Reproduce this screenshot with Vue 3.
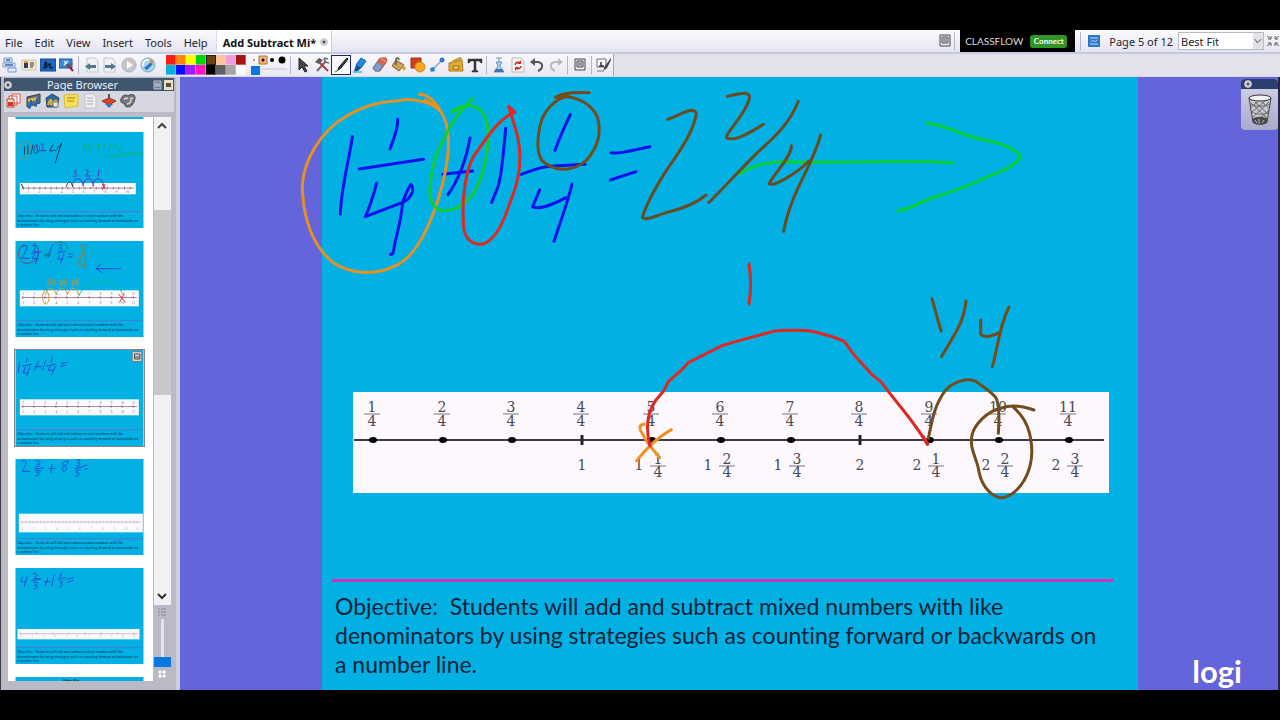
<script setup>
const menus = ['File', 'Edit', 'View', 'Insert', 'Tools', 'Help']

const shape = (d, fill = 'none', stroke = 'none', width = 1) => ({ d, fill, stroke, width })

const fileTools = [
  { name: 'Main menu', parts: [shape('M2 1h8v4H2zM1 6h12v4H1zM6 11h8v4H6z', '#dfe9f8', '#7d9bc8'), shape('M4 3h4M3 8h8', 'none', '#3466b0', 1.5)] },
  { name: 'Desktop tools', parts: [shape('M1 3h14v10H1z', '#f3ead0', '#c9c2ae'), shape('M3 6h4v5H3z', '#2b3f60'), shape('M3 4h4v2H3z', '#e09a30'), shape('M9 6h4M9 8h4M9 10h3', 'none', '#333')] },
  { name: 'Annotate over desktop', parts: [shape('M0 2h16v12H0z', '#1f68bd', '#114a90'), shape('M3 11C7 9 7 5 6 5s-2 5-1 6 4-5 5-4-2 4 1 4l2-1', 'none', '#06204e', 1.5)] },
  { name: 'Revealer', parts: [shape('M0 2h13v9H0z', '#3b86d0', '#1d5aa5'), shape('M5 4l4 4M9 4L5 8', 'none', '#d8ecff', 1.5), shape('M8 7l6 7', 'none', '#8f2430', 2), shape('M8 11l5-5', 'none', '#5b6070', 2)] }
]
const pageTools = [
  { name: 'Previous page', parts: [shape('M4 1h8l3 3v11H4z', '#f0f1f5', '#c3c6cf'), shape('M7 6v2h6v3H7v2L2 9.500z', '#55768f')] },
  { name: 'Next page', parts: [shape('M2 1h8l3 3v11H2z', '#f0f1f5', '#c3c6cf'), shape('M9 6v2H3v3h6v2l5-3.500z', '#55768f')] },
  { name: 'Play', parts: [shape('M8 1a7 7 0 100 14A7 7 0 008 1z', '#c6c6ca', '#b0b0b5'), shape('M6 4l6 4-6 4z', '#fff')] },
  { name: 'Profile', parts: [shape('M8 1a7 7 0 100 14A7 7 0 008 1z', '#a9d4ef', '#88a9bf'), shape('M4 11l7-6 2 2-6 6z', '#2c74bd'), shape('M9 2l5 2-3 3z', '#e8913c'), shape('M3 9c-1-4 3-7 6-6', 'none', '#fff', 1.5)] }
]
const drawTools = [
  { name: 'Select', parts: [shape('M4 1v12l3-3 3 5 2-1-3-5h4z', '#45454a', '#242428')] },
  { name: 'Tools', parts: [shape('M3 14l9-10', 'none', '#6a6c72', 2), shape('M10 1l1 4 4 1M10 1l4 1', 'none', '#6a6c72', 1.5), shape('M5 5l9 9', 'none', '#b33a36', 2), shape('M1 5l4-4 4 2-4 4z', '#5a5b60')] },
  { name: 'Pen', selected: true, parts: [shape('M14 1L6 10l-1 3 3-2 7-9z', '#333a3e', '#16191c'), shape('M5 13l-3 2', 'none', '#7c8b3c', 1.5)] },
  { name: 'Highlighter', parts: [shape('M8 1l5 3-5 7-5-3z', '#1c8be0', '#0d66ae'), shape('M3 8l5 3-3 3H1z', '#1a4f86'), shape('M0 15h9', 'none', '#3cb6f0', 1.5)] },
  { name: 'Eraser', parts: [shape('M8 1h6l1 3-7 10H3l-2-3z', '#d8664e', '#b94a38'), shape('M5 5l6 4-4 5H3l-2-3z', '#7f9dc4', '#6b83ab'), shape('M8 1l7 4', 'none', '#eaa695')] },
  { name: 'Fill', parts: [shape('M5 3l8 5-5 6-7-5z', '#caa45a', '#80633a'), shape('M5 8V2c0-2 3-1 3 1', 'none', '#66583f', 1.5), shape('M12 8l3 3-2 3-2-3z', '#e0a228')] },
  { name: 'Shape', parts: [shape('M1 1h10v10H1z', '#d23c20', '#a52d18'), shape('M10 5a5 5 0 100 10 5 5 0 000-10z', '#f5a623', '#da8712')] },
  { name: 'Connector', parts: [shape('M3 13L13 3', 'none', '#7ba6d0', 1.5), shape('M13 1a2 2 0 100 4 2 2 0 000-4z', '#2a80d5', '#1e66b0'), shape('M1 11l4-1 1 4-4 1z', '#2a80d5')] },
  { name: 'Clip art', parts: [shape('M1 6l13-3 1 11H1z', '#e2ac32', '#ab7a1c'), shape('M4 5l8-4 2 3', 'none', '#c79a38', 2), shape('M5 9h6v3H5z', '#f6d67a', '#9b6b14')] },
  { name: 'Text', parts: [shape('M1 2h14v4h-1l-2-2H9v9l2 1v1H5v-1l2-1V4H4L2 6H1z', '#35353a', '#35353a', 0.5)] }
]
const editTools = [
  { name: 'Clear', parts: [shape('M5 1h6M8 1v4M5 5h6l-2 4 4 6H3l4-6z', '#a9cbe4', '#7395b3'), shape('M5 12h6l2 3H3z', '#3d78ac')] },
  { name: 'Reset page', parts: [shape('M2 1h9l3 3v11H2z', '#f6f6f8', '#bbb'), shape('M5 8a3 3 0 015-2M11 9a3 3 0 01-5 2', 'none', '#d02a24', 1.5), shape('M11 3v4H7zM5 14v-4h4z', '#d02a24')] },
  { name: 'Undo', parts: [shape('M3 5h6c6 1 5 7 0 9', 'none', '#55565c', 2), shape('M6 1L1 5l5 4z', '#55565c')] },
  { name: 'Redo', parts: [shape('M13 5H7c-6 1-5 7 0 9', 'none', '#b9bac0', 2), shape('M10 1l5 4-5 4z', '#b9bac0')] }
]
const noteIcon = [shape('M3 2h10v11H3z', '#ececf1', '#45464c'), shape('M5 4h6v6H5z', 'none', '#45464c'), shape('M6 6h4M6 8h4', 'none', '#45464c')]
const deskIcon = [shape('M1 2h9v8H1z', '#fff', '#666b74'), shape('M5 5v4M3 9h5', 'none', '#333', 1.5), shape('M15 1L9 9l-2 5 4-3 4-8z', '#3c4348'), shape('M1 14h7', 'none', '#777')]
const browserTools = [
  { name: 'Pages', parts: [shape('M6 1h8v9H6zM3 3h8v9H3z', '#fff', '#d9594a'), shape('M1 6h7v8H1z', '#f5e6d8', '#c23a2c'), shape('M2 9h5v4H2z', '#d2382a')] },
  { name: 'Resources', parts: [shape('M2 4l13-3v9L2 14z', '#5d6d82', '#333f50'), shape('M3 6l9-2v3l-9 2z', '#e5b53c'), shape('M6 7v6M12 5v6', 'none', '#2565b5', 2), shape('M3 14h3M9 12h3', 'none', '#2565b5', 3)] },
  { name: 'Objects', parts: [shape('M2 5l6-4 7 4-2 9H3z', '#2d6aa0', '#234b70'), shape('M4 12c3-9 4-4 3-1s5-7 6-2', 'none', '#e8b030', 2), shape('M9 9h5v5H9z', '#e8e8e8', '#777')] },
  { name: 'Notes', parts: [shape('M1 2l14-1v12l-13 2z', '#f8df58', '#dabf38'), shape('M4 5h8M4 8h7', 'none', '#a58a18')] },
  { name: 'Properties', parts: [shape('M3 1h8l3 3v11H3z', '#eeeeF1', '#c2c2c8'), shape('M5 5h6M5 8h6M5 11h6', 'none', '#aaa')] },
  { name: 'Actions', parts: [shape('M8 1v4', 'none', '#555', 2), shape('M1 8l7-3 7 3-7 4z', '#d64834', '#9a3325'), shape('M4 11h8l-4 4z', '#3d77ad')] },
  { name: 'Voting', parts: [shape('M1 6c1-4 5-5 7-3 2-2 7-2 7 1 0 5-3 10-7 10-3 0-4-2-3-4C2 11 0 9 1 6z', '#77797e', '#4a4b50'), shape('M4 6l4-1M10 6l3-1M7 11c2 0 4-2 4-4', 'none', '#ddd', 1.5)] }
]

const colours = ['#fb1d10', '#ff8410', '#ffff08', '#08d210', '#6d4311', '#f9c49c', '#ef9fdc', '#a81410', '#08b0e2', '#0a0aff', '#a31aff', '#ff16b8', '#000000', '#606060', '#a5a5a5', '#ffffff']

const marks = [
  { x: 373, top: '1' }, { x: 443, top: '2' }, { x: 512, top: '3' },
  { x: 582, top: '4', whole: '1' }, { x: 652, top: '5', whole: '1', part: '1' },
  { x: 721, top: '6', whole: '1', part: '2' }, { x: 791, top: '7', whole: '1', part: '3' },
  { x: 860, top: '8', whole: '2' }, { x: 930, top: '9', whole: '2', part: '1' },
  { x: 999, top: '10', whole: '2', part: '2' }, { x: 1069, top: '11', whole: '2', part: '3' }
]

const objective = [
  'Objective:\u00a0 Students will add and subtract mixed numbers with like',
  'denominators by using strategies such as counting forward or backwards on',
  'a number line.'
]

const blue = '#1c4fd6'
const thumbs = [
  { id: 2, blank: true, ink: [] },
  {
    id: 3, line: { x: 13, y: 153, w: 348, h: 34, ticks: 20, labels: false },
    ink: [
      shape('M30 27C5 35 5 82 28 82 54 78 52 26 30 27', 'none', '#7c9a68', 3),
      shape('M27 45v22M37 39v26M53 38l-7 28', 'none', '#17425e', 3),
      shape('M62 39c16 0 12 24-2 25-9-4-5-22 2-25M63 42l4 18M76 36c12-5 6 20 0 20h15', 'none', '#343fb0', 3),
      shape('M112 39l-10 18 19-2M138 33c-5 25-15 0-12 18M138 33l-19 60', 'none', '#17425e', 3),
      shape('M208 35l-4 23M222 38l-12 12 13 8M233 37l-8 20M251 32l-4 25M244 40h14M268 36l-6 20M286 38l-5 20M300 36l-6 12 12-3M319 38l-8 20M263 79c20-12 36-11 35-8s22-10 25-6l21-4 36 4M290 76l88-12', 'none', '#08b478', 3),
      shape('M171 163c1-31 30-31 32 0 2-31 30-31 30 0 1-31 29-31 31 0M177 116c10-5 6 7 0 8 11 0 8 13-2 9M211 115c12-6 6 10 0 17h13M251 112l-3 20', 'none', '#5038c8', 3),
      shape('M153 163c2-17 16-17 18 0M18 157l6 12', 'none', '#333', 3),
      shape('M261 157l9 14M269 157l-8 15', 'none', '#e0203a', 3)
    ]
  },
  {
    id: 4, line: { x: 13, y: 148, w: 357, h: 48, ticks: 11, labels: true },
    ink: [
      shape('M26 10C2 18 2 67 34 67c38 0 46-51 20-60', 'none', '#704b6c', 3),
      shape('M20 17c22-13 16 10-3 35h23M51 15c13-7 11 7 1 17h13M47 38l31-6M56 41l-6 12h18M69 39L60 68M86 42h18M111 11L97 50M131 12c12-4 10 5 0 9 14-1 8 12-1 10M125 37l25-6M132 43l-6 11h16M145 40l-10 27M159 39h12M158 48h12M315 83h-73l13-13M242 83l18 12', 'none', blue, 3),
      shape('M90 35l12 12M86 50l15-16', 'none', '#138a70', 3),
      shape('M115 9c12-10 40-8 42 14', 'none', '#138a70', 3),
      shape('M194 15c18-6 15 7 3 14 17 0 12 13-5 12M187 49l24-5M195 55l-6 16h18M210 52l-5 31', 'none', '#698b66', 4),
      shape('M90 148c-12 0-11 41 0 41 15 0 13-41 0-41M90 160c8-24 25-24 32 0 8-24 25-24 34 0 8-24 25-24 34 0', 'none', '#dc973c', 3),
      shape('M100 113l-4 20M112 115l-12 20M119 117l-8 12h10M138 113l-4 20M148 115l-12 20M154 117l-8 12h10M173 113l-4 20M183 115l-12 20M189 117l-8 12h10', 'none', '#88996a', 4),
      shape('M190 164c21-47 98-62 128-12', 'none', '#08c888', 3),
      shape('M309 159l20 24M326 158l-14 26', 'none', '#ef3a35', 3)
    ]
  },
  {
    id: 5, active: true, line: { x: 13, y: 148, w: 357, h: 48, ticks: 11, labels: true },
    ink: [shape('M12 36L8 66M36 25l-4 12M22 48l26-5M29 52l-6 17h15M43 50l-9 27M58 50h19M69 35L57 60M91 30l-10 30M111 21l-5 15M94 48l26-6M103 50l-5 11h15M120 48l-12 28M137 41l18-4M135 49l17-4', 'none', blue, 3)]
  },
  {
    id: 6, line: { x: 10, y: 164, w: 372, h: 56, ticks: 32, labels: true, faint: true },
    ink: [shape('M18 8c20-10 15 5 3 29h21M61 6c18-5 15 6 4 10 14 0 9 8-5 8M57 31l28-5M76 35H64l-1 6c12-2 12 9-2 9M100 28h20M110 16l-4 25M158 7c-26-2-16 12-8 17 10 8-7 19-10 8-2-12 19-13 18-25M184 3c14-5 12 5 2 8 14 1 8 11-3 10M178 29l25-6M195 33h-12l-1 7c12-2 12 12-2 12M206 20l9-2M208 31l10-3', 'none', blue, 3)]
  },
  {
    id: 7, line: { x: 6, y: 183, w: 366, h: 31, ticks: 8, labels: true, faint: true },
    ink: [shape('M21 27l-5 14h15M35 26l-9 29M53 18c17-6 14 7 2 14h16M49 38l28-5M55 44c18-4 12 7 2 8 15-1 8 12-3 11M87 41h16M97 30l-8 24M116 21l-8 34M137 15l-4 14M126 34l24-5M133 38c12-2 9 6 1 8 11 0 6 11-3 11M157 33l17-4M155 43l17-5', 'none', blue, 3)]
  },
  { id: 8, title: 'Video Bits', ink: [] }
]
</script>

<template>
  <div class="app">
    <header class="menubar">
      <nav class="menus">
        <button v-for="m in menus" :key="m" type="button">{{ m }}</button>
      </nav>
      <div class="tab">
        <span>Add Subtract Mi*</span>
        <button type="button" class="dot" aria-label="Close flipchart"></button>
      </div>
      <div class="menubar-right">
        <button type="button" class="icon" aria-label="Page notes">
          <svg viewBox="0 0 16 16"><path v-for="(p, i) in noteIcon" :key="i" :d="p.d" :fill="p.fill" :stroke="p.stroke" /></svg>
        </button>
        <span class="rule"></span>
        <div class="classflow"><span>CLASSFLOW</span><button type="button">Connect</button></div>
        <span class="rule"></span>
        <svg class="page-icon" viewBox="0 0 12 12"><path d="M0 0h12v12H0z" fill="#2f77c8" /><path d="M2 3h8M2 9h8M3 7c2-4 4 2 6-2" fill="none" stroke="#b5dcff" /></svg>
        <label class="zoom-box"><span>Page 5 of 12</span>
          <span class="select-wrap">
            <select><option>Best Fit</option></select>
            <svg viewBox="0 0 11 16"><path d="M2 6l3 4 4-4" fill="none" stroke="#444" /></svg>
          </span>
        </label>
        <button type="button" class="expand" aria-label="Full screen">
          <svg viewBox="0 0 14 14"><path d="M1 2l4 3M1 12l4-3M13 2L9 5M13 12L9 9M5 2v3H2M5 12V9H2M9 2v3h3M9 12V9h3" fill="none" stroke="#5a5c66" /></svg>
        </button>
      </div>
    </header>

    <div class="toolbar">
      <div class="tools">
        <button v-for="t in fileTools" :key="t.name" type="button" class="icon" :aria-label="t.name">
          <svg viewBox="0 0 16 16"><path v-for="(p, i) in t.parts" :key="i" :d="p.d" :fill="p.fill" :stroke="p.stroke" :stroke-width="p.width" /></svg>
        </button>
        <span class="rule"></span>
        <button v-for="t in pageTools" :key="t.name" type="button" class="icon" :aria-label="t.name">
          <svg viewBox="0 0 16 16"><path v-for="(p, i) in t.parts" :key="i" :d="p.d" :fill="p.fill" :stroke="p.stroke" :stroke-width="p.width" /></svg>
        </button>
        <div class="palette">
          <button v-for="(c, i) in colours" :key="c" type="button" :aria-label="'Colour ' + c" :class="{ picked: i === 4 }" :style="{ background: c }"></button>
        </div>
        <svg class="widths" viewBox="0 0 38 20">
          <path d="M9 1h8v8H9z" fill="#f7b377" stroke="#b87338" />
          <circle cx="4" cy="5" r="1" fill="#a57b66" /><circle cx="13" cy="5" r="1.500" /><circle cx="22" cy="5" r="2" /><circle cx="32" cy="5" r="3.500" />
          <path d="M1 11h9v9H1z" fill="#0878e0" /><path d="M12 14h25" stroke="#c5c5d0" />
        </svg>
        <span class="rule"></span>
        <button v-for="t in drawTools" :key="t.name" type="button" class="icon" :class="{ selected: t.selected }" :aria-label="t.name">
          <svg viewBox="0 0 16 16"><path v-for="(p, i) in t.parts" :key="i" :d="p.d" :fill="p.fill" :stroke="p.stroke" :stroke-width="p.width" /></svg>
        </button>
        <span class="rule"></span>
        <button v-for="t in editTools" :key="t.name" type="button" class="icon" :aria-label="t.name">
          <svg viewBox="0 0 16 16"><path v-for="(p, i) in t.parts" :key="i" :d="p.d" :fill="p.fill" :stroke="p.stroke" :stroke-width="p.width" /></svg>
        </button>
        <span class="rule"></span>
        <button type="button" class="icon" aria-label="Notes">
          <svg viewBox="0 0 16 16"><path v-for="(p, i) in noteIcon" :key="i" :d="p.d" :fill="p.fill" :stroke="p.stroke" /></svg>
        </button>
        <span class="rule"></span>
        <button type="button" class="icon" aria-label="Desktop annotate">
          <svg viewBox="0 0 16 16"><path v-for="(p, i) in deskIcon" :key="i" :d="p.d" :fill="p.fill" :stroke="p.stroke" :stroke-width="p.width" /></svg>
        </button>
      </div>
    </div>

    <div class="work">
      <aside class="browser">
        <div class="browser-head">
          <button type="button" class="dot" aria-label="Close page browser"></button>
          <h2>Page Browser</h2>
          <svg viewBox="0 0 20 10"><path d="M1 1h7v8H1z" fill="#6d7c8c" stroke="#c2cad3" /><path d="M2 4h5M2 6h5" stroke="#d8dee4" /><path d="M11 0h9v10h-9z" fill="#e3dfcc" /><path d="M13 3h5v4h-5z" fill="#5e5030" /></svg>
        </div>
        <div class="browser-tools">
          <button v-for="t in browserTools" :key="t.name" type="button" class="icon" :aria-label="t.name">
            <svg viewBox="0 0 16 16"><path v-for="(p, i) in t.parts" :key="i" :d="p.d" :fill="p.fill" :stroke="p.stroke" :stroke-width="p.width" /></svg>
          </button>
        </div>
        <div class="pages">
          <div class="list">
            <svg v-for="t in thumbs" :key="t.id" class="thumb" :class="{ active: t.active }" viewBox="0 0 384 288">
              <rect width="384" height="288" fill="#02b1e4" />
              <g v-if="t.line">
                <rect :x="t.line.x" :y="t.line.y" :width="t.line.w" :height="t.line.h" fill="#fdfbff" />
                <path :d="`M${t.line.x + 6} ${t.line.y + t.line.h * 0.45}h${t.line.w - 12}`" :stroke="t.line.faint ? '#b7a0ac' : '#6f5260'" stroke-width="2" />
                <path v-for="n in t.line.ticks" :key="n" :d="`M${t.line.x + 9 + (n - 1) * (t.line.w - 26) / (t.line.ticks - 1)} ${t.line.y + t.line.h * 0.45 - 4}v8`" :stroke="t.line.faint ? '#c4b8c4' : '#7a5963'" stroke-width="2" />
                <template v-if="t.line.labels">
                  <text v-for="n in 11" :key="n" class="tick-label" :class="{ faint: t.line.faint }" :x="t.line.x + 10 + (n - 1) * (t.line.w - 26) / 10" :y="t.line.y + t.line.h - 7">{{ n }}</text>
                </template>
                <template v-if="t.line.labels && !t.line.faint">
                  <text v-for="n in 11" :key="n" class="tick-label" :x="t.line.x + 10 + (n - 1) * (t.line.w - 26) / 10" :y="t.line.y + 14">{{ n }}</text>
                </template>
                <template v-if="!t.line.labels">
                  <text v-for="n in 10" :key="n" class="tick-label" :x="t.line.x + 26 + (n - 1) * 33" :y="t.line.y + 30">{{ n }}</text>
                </template>
              </g>
              <text v-if="t.title" class="thumb-title" x="142" y="16">{{ t.title }}</text>
              <template v-else-if="!t.blank">
                <path d="M3 239h374" stroke="#6a62c8" stroke-width="2" />
                <text v-for="(o, i) in objective" :key="i" class="thumb-text" x="5" :y="255 + i * 14">{{ o }}</text>
              </template>
              <path v-for="(p, i) in t.ink" :key="i" :d="p.d" fill="none" :stroke="p.stroke" :stroke-width="p.width" stroke-linecap="round" stroke-linejoin="round" />
              <g v-if="t.active"><path d="M350 5h29v30h-29z" fill="#d8d8dc" stroke="#777" stroke-width="3" /><path d="M357 12h16v15h-16zM359 21h12" fill="none" stroke="#444" stroke-width="3" /></g>
            </svg>
          </div>
          <div class="rail">
            <div class="track">
              <button type="button" aria-label="Scroll up"><svg viewBox="0 0 10 8"><path d="M1 6l4-4 4 4" fill="none" stroke="#444" stroke-width="2" /></svg></button>
              <div class="grip"></div>
              <button type="button" aria-label="Scroll down"><svg viewBox="0 0 10 8"><path d="M1 2l4 4 4-4" fill="none" stroke="#333" stroke-width="2" /></svg></button>
            </div>
            <svg class="rail-icon" viewBox="0 0 8 8"><path d="M0 1h2M3 1h5M0 4h2M3 4h5M0 7h2M3 7h5" stroke="#8a8a94" /></svg>
            <input type="range" min="0" max="10" value="0" aria-label="Thumbnail size" />
            <svg class="rail-icon" viewBox="0 0 8 8"><path d="M1 1h2v2H1zM5 1h2v2H5zM1 5h2v2H1zM5 5h2v2H5z" fill="#f8f8fb" stroke="#fff" /></svg>
          </div>
        </div>
      </aside>

      <main class="canvas">
        <section class="slide">
          <svg class="board" viewBox="0 0 816 502">
            <g transform="translate(-322 -77)">
              <rect x="353" y="392" width="756" height="101" fill="#fcf8fe" />
              <path d="M354 440h750" stroke="#3c3a42" stroke-width="2" />
              <g v-for="m in marks" :key="m.x" class="mark">
                <path v-if="m.top === '4' || m.top === '8'" :d="`M${m.x} 435v10`" stroke="#222" stroke-width="3" />
                <ellipse v-else :cx="m.x" cy="440" rx="4" ry="3" fill="#050505" />
                <text :x="m.x - 1" y="412">{{ m.top }}</text>
                <path :d="`M${m.x - 9} 414h16`" stroke="#77747c" />
                <text :x="m.x - 1" y="426">4</text>
                <template v-if="m.part">
                  <text :x="m.x - 13" y="470">{{ m.whole }}</text>
                  <text :x="m.x + 6" y="464">{{ m.part }}</text>
                  <path :d="`M${m.x - 2} 466h16`" stroke="#77747c" />
                  <text :x="m.x + 6" y="477">4</text>
                </template>
                <text v-else-if="m.whole" :x="m.x" y="470">{{ m.whole }}</text>
              </g>
              <g class="ink" transform="translate(290 80) scale(.33333)">
                <path stroke="#1010ee" d="M187 170C178 240 153 320 151 403M323 118C325 145 310 180 300 207M208 267L400 238M260 309C252 340 242 375 226 410L338 367C365 354 375 328 363 313C350 330 345 350 338 367C333 430 317 470 312 503C311 517 308 525 301 523M540 174C530 230 512 290 474 344M458 283L548 273M647 145C640 230 632 310 620 330L605 367M841 104C826 135 808 175 795 211M694 283C740 266 760 259 790 258L885 253M749 330L728 380C750 392 795 370 828 353M846 312C835 360 820 400 792 484M963 219C1000 222 1040 207 1080 200M961 300L1038 275" />
                <path stroke="#e59126" d="M453 96C430 68 370 52 325 62C250 65 190 90 140 128C70 185 30 270 38 345C45 430 70 500 130 548C180 580 250 588 310 560C380 535 430 420 458 310C480 220 483 140 453 96C430 55 410 43 388 43M405 60L442 82" />
                <path stroke="#12ce32" d="M485 96C530 62 575 75 588 120C605 170 588 280 550 340C515 390 450 410 428 372C408 340 428 230 460 180C480 135 510 90 548 56M487 94L520 82" />
                <path stroke="#de2823" d="M670 98C620 120 580 190 550 230C520 290 515 380 522 450C530 485 555 497 583 491C630 470 650 395 672 335C695 270 692 210 682 165L656 79L675 98" />
                <path stroke="#754b1c" d="M898 38C840 35 810 42 796 52C850 43 900 65 922 110C935 155 925 200 890 240C850 278 790 275 756 242C735 210 745 150 755 120C770 82 800 55 835 49" />
              </g>
              <g class="ink" transform="translate(620 80) scale(.33333)">
                <path stroke="#08ce35" d="M359 282C390 258 430 248 480 246L640 247C760 247 870 240 1000 248M920 129C980 137 1025 165 1080 177C1150 190 1190 208 1202 230C1180 265 1130 278 1080 300C1000 340 930 350 892 373C865 386 850 390 833 393" />
                <path stroke="#6a4b20" d="M143 118C180 105 225 75 229 102C220 160 170 225 135 278C102 330 80 370 67 412C75 425 110 405 150 395C200 382 235 365 258 345M322 49C380 35 395 35 386 63C370 110 320 155 319 172C335 187 385 162 430 133M535 64C510 130 460 175 415 215C350 280 310 325 267 367M514 197C518 225 460 285 447 311C460 322 530 280 567 243M602 165C580 245 535 310 515 370C500 405 496 430 491 454" />
                <path stroke="#de2823" d="M387 552C393 590 393 635 387 672" />
              </g>
              <g class="ink" transform="translate(340 310) scale(.33333)">
                <path stroke="#f09220" d="M913 343C895 343 897 360 908 372C920 400 945 425 959 443M994 359C960 378 920 414 890 452" />
                <path stroke="#de2823" d="M930 408C918 360 918 310 948 270L970 244L985 215L1022 182L1045 158L1100 130L1148 106L1200 91L1300 64C1330 60 1390 60 1416 64C1450 72 1480 80 1513 94L1540 132L1592 190L1625 218C1670 280 1720 330 1762 403" />
              </g>
              <g class="ink" transform="translate(720 290) scale(.33333)">
                <path stroke="#de2823" d="M610 440L623 462" />
                <path stroke="#754b1c" d="M636 26L663 123M738 33C730 110 690 150 665 200M782 90V133C795 145 820 138 838 128M867 51C835 115 835 170 817 230M625 445C635 400 640 350 676 301C700 275 740 262 768 274C790 292 815 305 829 325C838 350 838 390 835 430M942 360C900 345 870 344 845 354C800 363 763 405 756 435C748 480 770 500 777 545C785 590 820 627 850 623C900 610 940 545 935 470C930 400 900 370 878 349" />
              </g>
            </g>
          </svg>
          <hr />
          <p class="objective"><span v-for="o in objective" :key="o">{{ o }}</span></p>
        </section>
        <div class="trash">
          <div class="trash-head"><button type="button" class="dot" aria-label="Close bin"></button></div>
          <svg viewBox="0 0 26 32">
            <path d="M2 4l4 24c3 3 11 3 14 0l4-24z" fill="#c9c9cc" stroke="#444" />
            <ellipse cx="13" cy="4" rx="11" ry="3" fill="#f2f2f2" stroke="#333" />
            <path d="M4 9l17 16M8 8l14 13M14 7l9 8M22 8L6 23M18 7L5 18M12 7L4 13M22 16L9 28M3 10c6 3 14 3 20 0M5 18c5 3 12 3 17 0" fill="none" stroke="#6c6c70" />
            <path d="M5 25c4-3 12-3 16 0l-1 4c-3 2-11 2-14 0z" fill="#4b4b4e" />
            <path d="M8 26l2 3M12 25v5M17 26l-2 3" stroke="#b8b8bb" />
          </svg>
        </div>
        <div class="logi">logi</div>
      </main>
    </div>
  </div>
</template>

<style>
html, body { margin: 0; background: #000; }
</style>

<style scoped>
.app { box-sizing: border-box; height: 100vh; padding: 30px 0; display: flex; flex-direction: column; background: #000; font-family: "Noto Sans", "Open Sans", sans-serif; font-size: 11px; color: #26262c; overflow: hidden; }
button { border: 0; padding: 0; margin: 0; background: none; font: inherit; color: inherit; }
svg { display: block; }
.menubar { flex: none; height: 24px; box-sizing: border-box; display: flex; align-items: stretch; background: linear-gradient(#fbfbfd, #e5e3f1); border-bottom: 2px solid #c3cae0; }
.menus { display: flex; align-items: center; gap: 12px; padding: 2px 8px 0 5px; }
.tab { display: flex; align-items: center; gap: 4px; padding: 2px 3px 0 6px; background: #fff; border-left: 1px solid #dcdce8; border-right: 1px solid #cfcfdc; font-weight: 700; color: #111; }
.dot { flex: none; width: 8px; height: 8px; border-radius: 50%; background: radial-gradient(#555 20%, #d8d8dc 50%); border: 1px solid #c4c6cc; box-sizing: border-box; }
.menubar-right { margin-left: auto; display: flex; align-items: center; }
.icon { flex: none; width: 19px; height: 20px; display: grid; place-items: center; }
.icon svg { width: 16px; height: 16px; }
.rule { flex: none; width: 1px; height: 18px; background: #b4b6c8; margin: 0 2px; }
.menubar-right .rule { margin: 0 5px 0 0; }
.menubar-right .rule + .page-icon { margin-left: 2px; }
.classflow { display: flex; align-items: center; gap: 7px; height: 22px; padding: 0 8px 0 5px; margin-right: 5px; background: #000; color: #dcdcdc; font-family: Lato, sans-serif; font-size: 10px; }
.classflow button { width: 37px; height: 13px; border-radius: 3px; background: #2f9626; color: #fff; font-size: 8px; font-weight: 700; line-height: 13px; }
.page-icon { width: 12px; height: 12px; margin: 0 9px 0 7px; }
.zoom-box { display: flex; align-items: center; gap: 5px; }
.select-wrap { display: grid; width: 86px; height: 18px; border: 1px solid #b9bac4; box-sizing: border-box; background: #fff; }
.select-wrap select { grid-area: 1 / 1; appearance: none; border: 0; margin: 0; padding: 0 2px; background: none; font: inherit; color: inherit; }
.select-wrap svg { grid-area: 1 / 1; justify-self: end; width: 10px; height: 16px; background: #e2e2e6; pointer-events: none; }
.expand { margin-left: 2px; }
.expand svg { width: 14px; height: 14px; }
.toolbar { flex: none; height: 23px; display: flex; background: #e5e1ec; border-bottom: 1px solid #d6d6e4; box-sizing: border-box; }
.tools { display: flex; align-items: center; background: linear-gradient(#f8f8fc, #e9e8f3); border-right: 1px solid #a6a6b0; }
.icon.selected { width: 20px; height: 20px; border: 1px solid #24246a; box-sizing: border-box; background: #f8f8fb; }
.palette { display: grid; grid-template-columns: repeat(8, 10px); grid-auto-rows: 10px; margin: 0 4px 0 9px; }
.palette button { border: 1px solid #ddd6; border-width: 0 1px 1px 0; }
.palette .picked { border: 1px solid #222; }
.widths { width: 38px; height: 20px; }
.work { flex: 1; min-height: 0; display: flex; }
.browser { flex: none; width: 180px; box-sizing: border-box; display: flex; flex-direction: column; padding: 1px 2px 0 3px; border-right: 4px solid #cfcfe2; border-left: 1px solid #3b3b42; background: #b9bac6; }
.browser-head { flex: none; height: 13px; display: flex; align-items: center; justify-content: space-between; padding-right: 1px; background: #3f566e; color: #e8edf2; }
.browser-head h2 { margin: 0; font-size: 11px; font-weight: 400; line-height: 13px; }
.browser-head > svg { width: 20px; height: 10px; }
.browser-tools { flex: none; display: flex; align-items: flex-start; height: 21px; margin-bottom: 5px; background: #d7d7e2; }
.browser-tools .icon { height: 19px; }
.pages { flex: 1; min-height: 0; display: flex; margin: 0 3px 9px 4px; }
.list { flex: 1; min-width: 0; overflow: hidden; background: #fff; display: flex; flex-direction: column; gap: 13px; padding-left: 7px; }
.thumb { flex: none; width: 129px; height: 96px; }
.thumb:first-child { margin-top: -94px; }
.thumb.active { outline: 1px solid #7f8288; }
.thumb-text { font: 11px Lato, sans-serif; fill: #04355a; }
.thumb-title { font: 700 11px Lato, sans-serif; fill: #042338; }
.tick-label { font: 9px "Liberation Serif", serif; text-anchor: middle; fill: #54505a; }
.tick-label.faint { fill: #aaa6b4; }
.rail { flex: none; width: 18px; display: flex; flex-direction: column; align-items: center; background: #b9bac6; }
.track { flex: 1; width: 17px; display: flex; flex-direction: column; justify-content: space-between; align-items: center; background: #f1f0f4; position: relative; }
.track button { width: 17px; height: 18px; display: grid; place-items: center; }
.track button svg { width: 10px; height: 8px; }
.grip { position: absolute; top: 19%; width: 17px; height: 38%; background: #c8c8cc; }
.rail-icon { width: 8px; height: 8px; margin: 3px 0; }
.rail input { appearance: none; writing-mode: vertical-lr; direction: rtl; width: 17px; height: 48px; margin: 0; background: linear-gradient(90deg, transparent 7px, #e4e4ec 7px 10px, transparent 10px); }
.rail input::-webkit-slider-thumb { appearance: none; width: 17px; height: 10px; background: #0877de; }
.canvas { flex: 1; min-width: 0; position: relative; padding: 0 140px 0 142px; background: #6465da; border-right: 2px solid #24244c; }
.slide { height: 100%; background: #02b1e4; overflow: visible; }
.board { width: 100%; height: auto; overflow: visible; }
.mark text { font: 14px "DejaVu Serif", serif; text-anchor: middle; fill: #4b484f; }
.ink path { fill: none; stroke-width: 9; stroke-linecap: round; stroke-linejoin: round; }
.slide hr { height: 3px; border: 0; margin: 0 24px 0 10px; background: #cc36bd; }
.objective { margin: 10px 0 0 13px; font-family: Lato, sans-serif; font-size: 23px; line-height: 29px; font-variant-ligatures: none; color: #062238; }
.objective span { display: block; white-space: nowrap; }
.trash { position: absolute; top: 2px; right: 0; width: 37px; height: 51px; border-radius: 4px; background: linear-gradient(#d5d5e8, #a9a9cc); overflow: hidden; display: flex; flex-direction: column; align-items: center; }
.trash-head { width: 100%; height: 10px; padding: 1px 3px; box-sizing: border-box; background: #2c3f70; display: flex; }
.trash > svg { width: 26px; height: 32px; margin-top: 5px; }
.logi { position: absolute; right: 36px; bottom: 0; font-family: Lato, sans-serif; font-weight: 700; font-size: 31px; line-height: 38px; color: #fff; }
</style>
